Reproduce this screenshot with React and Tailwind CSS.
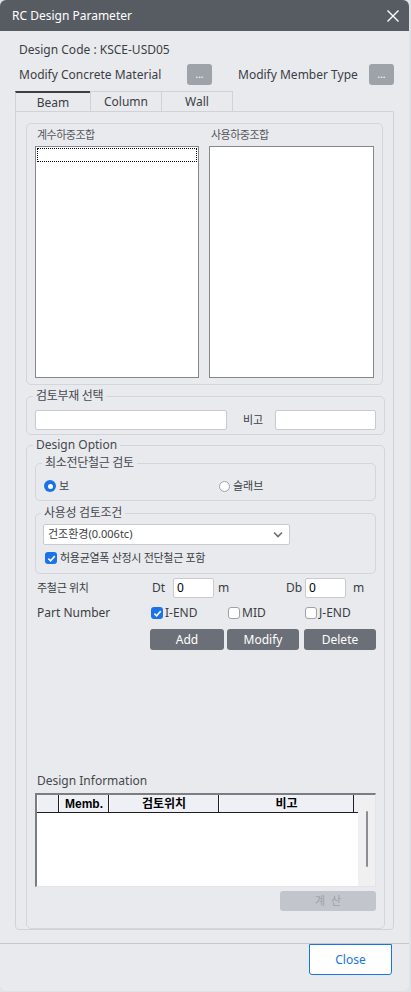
import React from "react";

const KR = { fontFamily: '"Noto Sans", "Noto Sans CJK KR", sans-serif' };

function Legend({ children, cls = "" }) {
  return (
    <legend className={`px-[3px] ml-[-2px] text-[12px] leading-[14px] text-[#45484d] ${cls}`}>
      {children}
    </legend>
  );
}

function Check({ checked }) {
  return checked ? (
    <span className="w-[12px] h-[12px] rounded-[3px] bg-[#1a73e8] flex items-center justify-center shrink-0">
      <svg width="9" height="9" viewBox="0 0 10 10">
        <path d="M1.5 5.2 L4 7.6 L8.6 2.4" fill="none" stroke="white" strokeWidth="1.8" />
      </svg>
    </span>
  ) : (
    <span className="w-[12px] h-[12px] rounded-[3px] bg-white border border-[#9ea2a8] shrink-0" />
  );
}

export default function App() {
  return (
    <div className="w-[411px] h-[992px] bg-[#dfe3e8] flex" style={KR}>
      <div className="w-[409px] h-[991px] rounded-[6px] bg-[#e9eaee] overflow-hidden flex flex-col">
        {/* Title bar */}
        <div className="h-[31px] bg-[#575c63] flex items-center justify-between pl-[12px] pr-[9px] shrink-0">
          <span className="text-white text-[12px]">RC Design Parameter</span>
          <svg width="14" height="14" viewBox="0 0 14 14">
            <path d="M1.5 1.5 L12.5 12.5 M12.5 1.5 L1.5 12.5" stroke="white" strokeWidth="1.4" />
          </svg>
        </div>

        <div className="px-[15px] flex flex-col text-[12px] text-[#3b3e43]">
          <div className="mt-[11px] h-[16px] leading-[16px] pl-[4px]">Design Code : KSCE-USD05</div>
          <div className="mt-[6px] h-[21px] flex items-center pl-[4px]">
            <span className="w-[168px]">Modify Concrete Material</span>
            <span className="w-[25px] h-[21px] rounded-[3px] bg-[#9ea3aa] text-white text-[10px] flex items-center justify-center">...</span>
            <span className="ml-[26px] w-[131px]">Modify Member Type</span>
            <span className="w-[25px] h-[21px] rounded-[3px] bg-[#9ea3aa] text-white text-[10px] flex items-center justify-center">...</span>
          </div>

          {/* Tabs */}
          <div className="mt-[6px] h-[20px] flex">
            <div className="w-[75px] h-[20px] border-t-2 border-t-[#3b3e43] border-l border-l-[#d0d2d6] flex items-center justify-center pt-[2px] text-[12px]">Beam</div>
            <div className="w-[71px] h-[20px] border-t border-l border-[#d0d2d6] flex items-center justify-center text-[12px]">Column</div>
            <div className="w-[72px] h-[20px] border-t border-l border-r border-[#d0d2d6] flex items-center justify-center text-[12px]">Wall</div>
          </div>

          {/* Frame */}
          <div className="h-[819px] border border-[#d0d2d6] rounded-b-[4px] px-[10px] pt-[11px] flex flex-col">
            {/* Load combinations */}
            <div className="h-[262px] border border-[#d3d5d9] rounded-[5px] px-[8px] pt-[4px] flex gap-[10px]">
              <div className="flex flex-col w-[165px]">
                <div className="h-[14px] leading-[14px] pl-[2px] text-[11px] tracking-[-0.5px] text-[#55585d]">계수하중조합</div>
                <div className="mt-[4px] h-[232px] bg-white border border-[#84878c] p-[1px]">
                  <div className="h-[14px] border border-dotted border-black" />
                </div>
              </div>
              <div className="flex flex-col w-[166px]">
                <div className="h-[14px] leading-[14px] pl-[2px] text-[11px] tracking-[-0.5px] text-[#55585d]">사용하중조합</div>
                <div className="mt-[4px] h-[232px] bg-white border border-[#84878c]" />
              </div>
            </div>

            {/* 검토부재 선택 */}
            <fieldset className="mt-[4px] border border-[#d3d5d9] rounded-[5px] px-[8px] pt-[7px] pb-[4px]">
              <Legend cls="text-[11px] tracking-[-0.3px]">검토부재 선택</Legend>
              <div className="flex items-center">
                <div className="w-[192px] h-[20px] bg-white border border-[#c9cbcf] rounded-[2px]" />
                <span className="ml-[16px] w-[32px] text-[11px]">비고</span>
                <div className="w-[101px] h-[20px] bg-white border border-[#c9cbcf] rounded-[2px]" />
              </div>
            </fieldset>

            {/* Design Option */}
            <fieldset className="mt-[3px] border border-[#d3d5d9] rounded-[5px] px-[8px] pt-[4px] pb-[6px] flex-1">
              <Legend>Design Option</Legend>

              <fieldset className="border border-[#d3d5d9] rounded-[5px] pl-[8px] pr-[8px] pt-[8px] pb-[6px]">
                <Legend cls="text-[11px] tracking-[-0.3px]">최소전단철근 검토</Legend>
                <div className="h-[16px] flex items-center text-[11px]">
                  <span className="w-[12px] h-[12px] rounded-full bg-[#1a73e8] flex items-center justify-center">
                    <span className="w-[5px] h-[5px] rounded-full bg-white" />
                  </span>
                  <span className="ml-[3px] w-[160px]">보</span>
                  <span className="w-[11px] h-[11px] rounded-full bg-white border border-[#9ea2a8]" />
                  <span className="ml-[3px]">슬래브</span>
                </div>
              </fieldset>

              <fieldset className="mt-[5px] border border-[#d3d5d9] rounded-[5px] pl-[7px] pr-[8px] pt-[4px] pb-[7px]">
                <Legend cls="text-[11px] tracking-[-0.3px]">사용성 검토조건</Legend>
                <div className="w-[247px] h-[21px] bg-white border border-[#c9cbcf] rounded-[2px] flex items-center justify-between pl-[4px] pr-[6px] text-[11px]">
                  <span>건조환경(0.006tc)</span>
                  <svg width="10" height="7" viewBox="0 0 10 7">
                    <path d="M1 1.5 L5 5.5 L9 1.5" fill="none" stroke="#6b6f75" strokeWidth="1.6" />
                  </svg>
                </div>
                <div className="mt-[5px] h-[16px] flex items-center pl-[2px] text-[11px] tracking-[-0.3px]">
                  <Check checked />
                  <span className="ml-[3px]">허용균열폭 산정시 전단철근 포함</span>
                </div>
              </fieldset>

              <div className="mt-[4px] h-[20px] flex items-center pl-[2px]">
                <span className="w-[115px] text-[11px] tracking-[-0.3px]">주철근 위치</span>
                <span className="w-[21px]">Dt</span>
                <div className="w-[41px] h-[20px] bg-white border border-[#c9cbcf] rounded-[2px] pl-[3px] leading-[18px] text-black">0</div>
                <span className="ml-[4px] w-[68px]">m</span>
                <span className="w-[19px]">Db</span>
                <div className="w-[41px] h-[20px] bg-white border border-[#c9cbcf] rounded-[2px] pl-[3px] leading-[18px] text-black">0</div>
                <span className="ml-[7px]">m</span>
              </div>

              <div className="mt-[7px] h-[16px] flex items-center pl-[2px]">
                <span className="w-[114px]">Part Number</span>
                <Check checked />
                <span className="ml-[2px] w-[63px]">I-END</span>
                <Check />
                <span className="ml-[2px] w-[63px]">MID</span>
                <Check />
                <span className="ml-[2px]">J-END</span>
              </div>

              <div className="mt-[8px] h-[21px] flex pl-[115px] gap-[3px]">
                <div className="w-[74px] h-[21px] rounded-[3px] bg-[#6b7078] text-white flex items-center justify-center">Add</div>
                <div className="w-[72px] h-[21px] rounded-[3px] bg-[#6b7078] text-white flex items-center justify-center">Modify</div>
                <div className="ml-[2px] w-[72px] h-[21px] rounded-[3px] bg-[#6b7078] text-white flex items-center justify-center">Delete</div>
              </div>

              <div className="mt-[123px] h-[16px] leading-[16px] pl-[2px] text-[#45484d]">Design Information</div>

              {/* Table */}
              <div className="mt-[4px] h-[94px] bg-white border-t-2 border-l-2 border-t-[#7a7d82] border-l-[#7a7d82] border-r border-b border-r-[#e3e4e7] border-b-[#e3e4e7] flex">
                <div className="flex-1 flex flex-col">
                  <div className="h-[18px] flex bg-[#eef0f5] border-b border-b-[#1f1f1f]" style={{ fontFamily: '"Liberation Sans", "Noto Sans CJK KR", sans-serif' }}>
                    <div className="w-[22px] border-l border-l-white border-r border-r-[#1f1f1f]" />
                    <div className="w-[50px] border-l border-l-white border-r border-r-[#1f1f1f] flex items-center justify-center font-bold text-[12px] text-black">Memb.</div>
                    <div className="w-[110px] border-l border-l-white border-r border-r-[#1f1f1f] flex items-center justify-center font-bold text-[12px] text-black">검토위치</div>
                    <div className="w-[135px] border-l border-l-white border-r border-r-[#1f1f1f] flex items-center justify-center font-bold text-[12px] text-black">비고</div>
                  </div>
                </div>
                <div className="w-[17px] bg-[#f0f0f0] flex justify-center pt-[16px]">
                  <div className="w-[2px] h-[56px] bg-[#8a8d92] rounded-full" />
                </div>
              </div>

              <div className="mt-[4px] flex justify-end">
                <div className="w-[96px] h-[20px] rounded-[3px] bg-[#c2c6cc] text-[#9da2a9] text-[11px] flex items-center justify-center tracking-[6px] pl-[6px]">계산</div>
              </div>
            </fieldset>
          </div>
        </div>

        {/* Footer */}
        <div className="mt-[13px] border-t border-[#c5c7cb] flex justify-end pr-[17px]">
          <div className="w-[83px] h-[31px] bg-white border border-[#1a73e8] rounded-b-[3px] text-[#1a73e8] text-[12px] flex items-center justify-center">Close</div>
        </div>
      </div>
    </div>
  );
}
